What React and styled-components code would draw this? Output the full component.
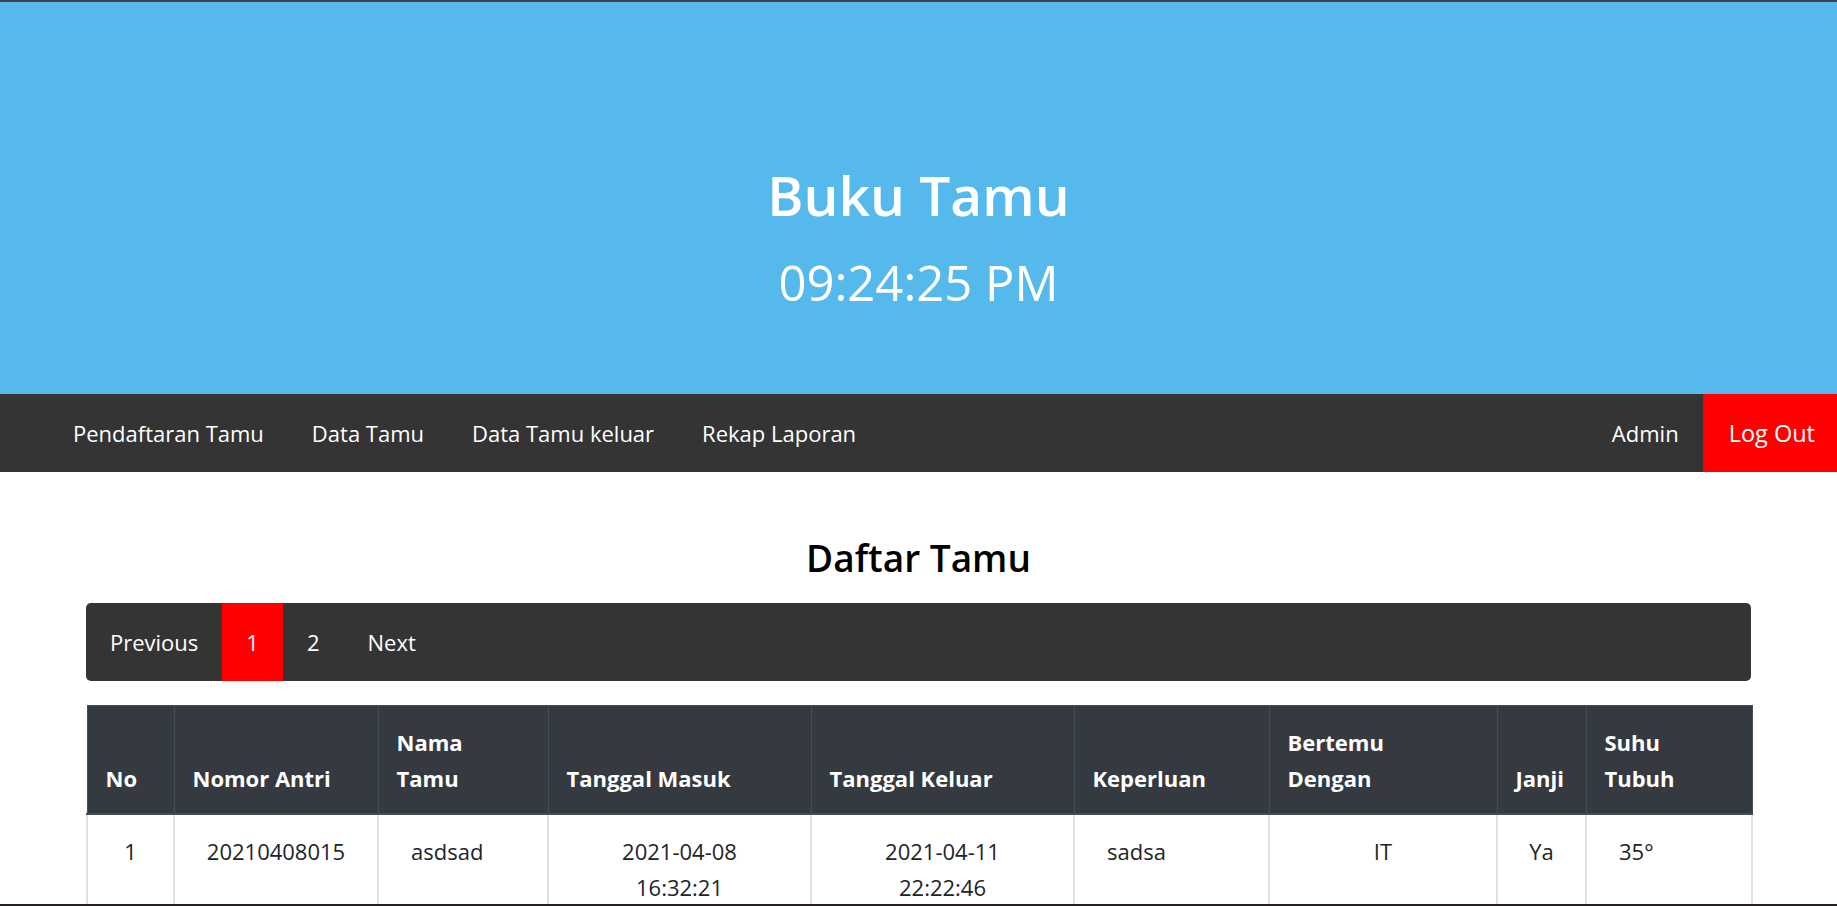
import React from 'react';
import styled, { createGlobalStyle } from 'styled-components';

const GlobalStyle = createGlobalStyle`
  * { box-sizing: border-box; }
  body {
    margin: 0;
    background: #fff;
    font-family: "Open Sans", "Noto Sans", sans-serif;
    color: #212529;
    border-top: 2px solid #3d4449;
  }
`;

const Header = styled.header`
  height: 392px;
  background-color: #56b9eb;
  color: #fff;
  display: flex;
  flex-direction: column;
  align-items: center;
  padding-top: 157px;
`;

const Title = styled.h1`
  margin: 0;
  font-size: 55px;
  line-height: 72px;
  font-weight: 600;
`;

const Clock = styled.div`
  margin-top: 20px;
  font-size: 49px;
  line-height: 62px;
  font-weight: 400;
`;

const NavBar = styled.nav`
  height: 78px;
  background-color: #343434;
  display: flex;
  align-items: stretch;
  justify-content: space-between;
  padding-left: 49px;
`;

const NavGroup = styled.div`
  display: flex;
  align-items: stretch;
`;

const NavLink = styled.a`
  display: flex;
  align-items: center;
  padding: ${(p) => (p.$danger ? '0 22px 0 26px' : '0 24px')};
  color: #fff;
  font-size: ${(p) => (p.$danger ? '23.5px' : '22px')};
  text-decoration: none;
  background-color: ${(p) => (p.$danger ? '#ff0000' : 'transparent')};
  cursor: pointer;
`;

const Main = styled.main`
  width: 1665px;
  margin: 0 auto;
  padding-top: 62px;
`;

const Heading = styled.h2`
  margin: 0 0 21px;
  text-align: center;
  font-size: 37px;
  line-height: 48px;
  font-weight: 600;
  color: #000;
`;

const Pager = styled.div`
  height: 78px;
  background-color: #343434;
  border-radius: 5px;
  display: flex;
  align-items: stretch;
  overflow: hidden;
`;

const PageItem = styled.a`
  display: flex;
  align-items: center;
  padding: 0 24px;
  color: #fff;
  font-size: 22px;
  background-color: ${(p) => (p.$active ? '#ff0000' : 'transparent')};
  cursor: pointer;
`;

const Table = styled.table`
  margin-top: 24px;
  width: 100%;
  border-collapse: collapse;
  table-layout: fixed;
  font-size: 22px;
  line-height: 36px;
`;

const Th = styled.th`
  background-color: #343a40;
  color: #fff;
  font-weight: 700;
  text-align: left;
  vertical-align: bottom;
  padding: 18px 18px 17px;
  border: 1px solid #454d55;
  border-bottom-width: 2px;
`;

const Td = styled.td`
  vertical-align: top;
  text-align: ${(p) => (p.$center ? 'center' : 'left')};
  padding: 18px 18px 18px ${(p) => (p.$center ? '18px' : '32px')};
  border: 2px solid #dee2e6;
  border-top: none;
  color: #212529;
`;

const BottomEdge = styled.div`
  position: fixed;
  left: 0;
  right: 0;
  bottom: 0;
  height: 2px;
  background-color: #2b1f26;
`;

const columns = [
  { label: 'No', width: 87 },
  { label: 'Nomor Antri', width: 204 },
  { label: ['Nama', 'Tamu'], width: 170 },
  { label: 'Tanggal Masuk', width: 263 },
  { label: 'Tanggal Keluar', width: 263 },
  { label: 'Keperluan', width: 195 },
  { label: ['Bertemu', 'Dengan'], width: 228 },
  { label: 'Janji', width: 89 },
  { label: ['Suhu', 'Tubuh'], width: 166 },
];

const rows = [
  {
    no: '1',
    antri: '20210408015',
    nama: 'asdsad',
    masuk: ['2021-04-08', '16:32:21'],
    keluar: ['2021-04-11', '22:22:46'],
    keperluan: 'sadsa',
    bertemu: 'IT',
    janji: 'Ya',
    suhu: '35°',
  },
];

const Lines = ({ value }) =>
  Array.isArray(value)
    ? value.map((v, i) => (
        <React.Fragment key={i}>
          {i > 0 && <br />}
          {v}
        </React.Fragment>
      ))
    : value;

const App = () => {
  return (
    <>
      <GlobalStyle />
      <Header>
        <Title>Buku Tamu</Title>
        <Clock>09:24:25 PM</Clock>
      </Header>
      <NavBar>
        <NavGroup>
          <NavLink>Pendaftaran Tamu</NavLink>
          <NavLink>Data Tamu</NavLink>
          <NavLink>Data Tamu keluar</NavLink>
          <NavLink>Rekap Laporan</NavLink>
        </NavGroup>
        <NavGroup>
          <NavLink>Admin</NavLink>
          <NavLink $danger>Log Out</NavLink>
        </NavGroup>
      </NavBar>
      <Main>
        <Heading>Daftar Tamu</Heading>
        <Pager>
          <PageItem>Previous</PageItem>
          <PageItem $active>1</PageItem>
          <PageItem>2</PageItem>
          <PageItem>Next</PageItem>
        </Pager>
        <Table>
          <colgroup>
            {columns.map((c, i) => (
              <col key={i} style={{ width: c.width }} />
            ))}
          </colgroup>
          <thead>
            <tr>
              {columns.map((c, i) => (
                <Th key={i}>
                  <Lines value={c.label} />
                </Th>
              ))}
            </tr>
          </thead>
          <tbody>
            {rows.map((r) => (
              <tr key={r.no}>
                <Td $center>{r.no}</Td>
                <Td $center>{r.antri}</Td>
                <Td>{r.nama}</Td>
                <Td $center><Lines value={r.masuk} /></Td>
                <Td $center><Lines value={r.keluar} /></Td>
                <Td>{r.keperluan}</Td>
                <Td $center>{r.bertemu}</Td>
                <Td $center>{r.janji}</Td>
                <Td>{r.suhu}</Td>
              </tr>
            ))}
          </tbody>
        </Table>
      </Main>
      <BottomEdge />
    </>
  );
};

export default App;
